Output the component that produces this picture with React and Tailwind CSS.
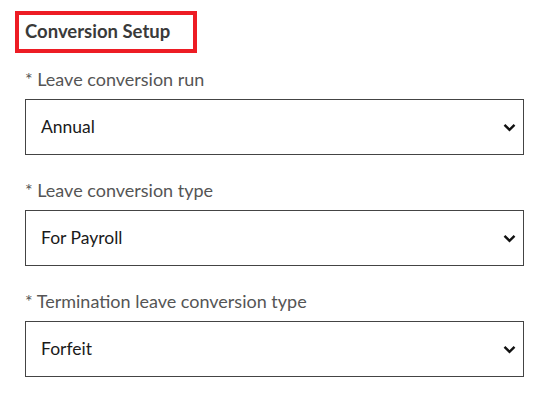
const fields = [
  { label: 'Leave conversion run', value: 'Annual' },
  { label: 'Leave conversion type', value: 'For Payroll' },
  { label: 'Termination leave conversion type', value: 'Forfeit' },
];

function Chevron() {
  return (
    <svg width="13" height="9" viewBox="0 0 13 9" fill="none" className="text-[#111]">
      <path d="M1.5 1.8 L6.5 6.8 L11.5 1.8" stroke="currentColor" strokeWidth="2.4" />
    </svg>
  );
}

function SelectField({ label, value }) {
  return (
    <div className="flex flex-col">
      <label className="text-[18px] leading-[24px] text-[#555555] mb-[8px]">* {label}</label>
      <div className="h-[56px] border-[1.5px] border-[#444444] bg-white flex items-center justify-between pl-[15px] pr-[7px]">
        <span className="text-[17.5px] text-[#1a1a1a]">{value}</span>
        <Chevron />
      </div>
    </div>
  );
}

export default function App() {
  return (
    <div className="w-[536px] h-[403px] bg-white pl-[15px] pt-[11px] font-['Lato',sans-serif]">
      <div className="w-[182px] h-[42px] border-4 border-[#ed1c24] flex items-center pl-[6px]">
        <h2 className="text-[18.5px] font-bold text-[#3a3a3a]">Conversion Setup</h2>
      </div>
      <div className="pl-[10px] w-[509px] mt-[14px] flex flex-col gap-[23px]">
        {fields.map((f) => (
          <SelectField key={f.label} label={f.label} value={f.value} />
        ))}
      </div>
    </div>
  );
}
